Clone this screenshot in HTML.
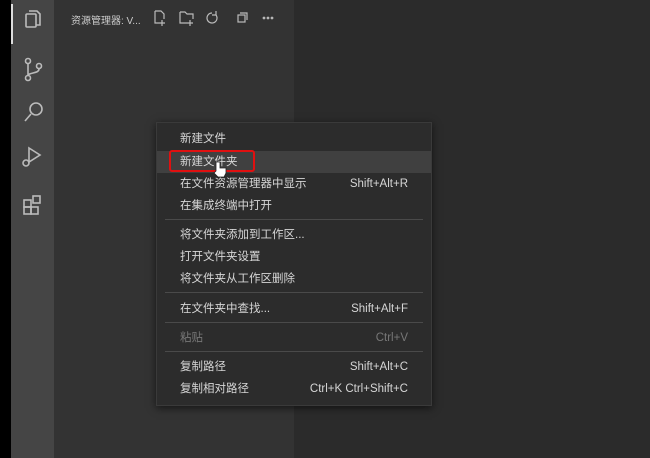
<!DOCTYPE html>
<html><head><meta charset="utf-8"><style>
*{margin:0;padding:0;box-sizing:border-box}
body{width:650px;height:458px;overflow:hidden;background:#2b2b2b;font-family:"Liberation Sans","Noto Sans CJK SC",sans-serif;position:relative}
.blk{position:absolute;left:0;top:0;width:11px;height:458px;background:#000}
.act{position:absolute;left:11px;top:0;width:43px;height:458px;background:#454545}
.side{position:absolute;left:54px;top:0;width:240px;height:458px;background:#333}
.ind{position:absolute;left:11px;top:4px;width:2px;height:40px;background:#ddd}
.title{position:absolute;left:71px;top:12px;font-size:10px;color:#ccc}
.menu{position:absolute;left:156px;top:122px;width:276px;height:284px;background:#2c2c2c;border:1px solid #3a3a3a;box-shadow:0 2px 8px rgba(0,0,0,.6)}
.it{position:absolute;left:0;width:274px;height:22px;font-size:11.5px;color:#d6d6d6;line-height:22px}
.it span{position:absolute;left:23px}
.it b{position:absolute;right:23px;font-weight:normal}
.hl{background:#404040}
.dim{color:#777}
.sep{position:absolute;left:8px;width:258px;height:1px;background:#4a4a4a}
.red{position:absolute;left:169px;top:150px;width:86px;height:22px;border:2px solid #e01010;border-radius:3px}
svg{position:absolute}
</style></head><body>
<div class="blk"></div><div class="act"></div><div class="side"></div><div class="ind"></div>
<svg width="43" height="240" style="left:11px;top:0" fill="none" stroke="#bbb" stroke-width="1.6">
<rect x="15" y="14" width="10" height="13" rx="1"/><path d="M18 11h8l3 3v11h-4"/>
<circle cx="17" cy="61" r="2.5"/><circle cx="17" cy="78" r="2.5"/><circle cx="28" cy="66" r="2.5"/><path d="M17 64v11M28 69c0 5-11 3-11 7"/>
<circle cx="25" cy="109" r="6"/><path d="M20 114l-6 7"/>
<path d="M18 148l11 7-11 7z"/><circle cx="15" cy="163" r="3"/>
<rect x="13" y="200" width="7" height="7"/><rect x="13" y="207" width="7" height="7"/><rect x="20" y="207" width="7" height="7"/><rect x="22" y="196" width="7" height="7"/>
</svg>
<div class="title">资源管理器: V...</div>
<svg width="130" height="20" style="left:150px;top:8px" fill="none" stroke="#bbb" stroke-width="1.2">
<path d="M5 3h6l3 3v5M5 3v12h5M12 12v6M9 15h6"/>
<path d="M30 4h5l2 2h6v5M30 4v11h7M40 12v6M37 15h6"/>
<path d="M62 5a5 5 0 1 0 4 2M66 3v4h-4"/>
<rect x="88" y="7" width="7" height="7"/><path d="M90 5h7v7"/>
<circle cx="114" cy="10" r=".8"/><circle cx="118" cy="10" r=".8"/><circle cx="122" cy="10" r=".8"/>
</svg>
<div class="menu">
<div class="it" style="top:5px"><span>新建文件</span></div>
<div class="it hl" style="top:28px"><span>新建文件夹</span></div>
<div class="it" style="top:50px"><span>在文件资源管理器中显示</span><b>Shift+Alt+R</b></div>
<div class="it" style="top:72px"><span>在集成终端中打开</span></div>
<div class="sep" style="top:96px"></div>
<div class="it" style="top:101px"><span>将文件夹添加到工作区...</span></div>
<div class="it" style="top:123px"><span>打开文件夹设置</span></div>
<div class="it" style="top:145px"><span>将文件夹从工作区删除</span></div>
<div class="sep" style="top:169px"></div>
<div class="it" style="top:175px"><span>在文件夹中查找...</span><b>Shift+Alt+F</b></div>
<div class="sep" style="top:199px"></div>
<div class="it dim" style="top:204px"><span>粘贴</span><b>Ctrl+V</b></div>
<div class="sep" style="top:228px"></div>
<div class="it" style="top:233px"><span>复制路径</span><b>Shift+Alt+C</b></div>
<div class="it" style="top:255px"><span>复制相对路径</span><b>Ctrl+K Ctrl+Shift+C</b></div>
</div>
<div class="red"></div>
<svg width="14" height="18" style="left:213px;top:160px"><path d="M3 2v9l-2 2 4 4h6l2-4v-5h-6V2z" fill="#fff" stroke="#222" stroke-width=".8"/></svg>
</body></html>
